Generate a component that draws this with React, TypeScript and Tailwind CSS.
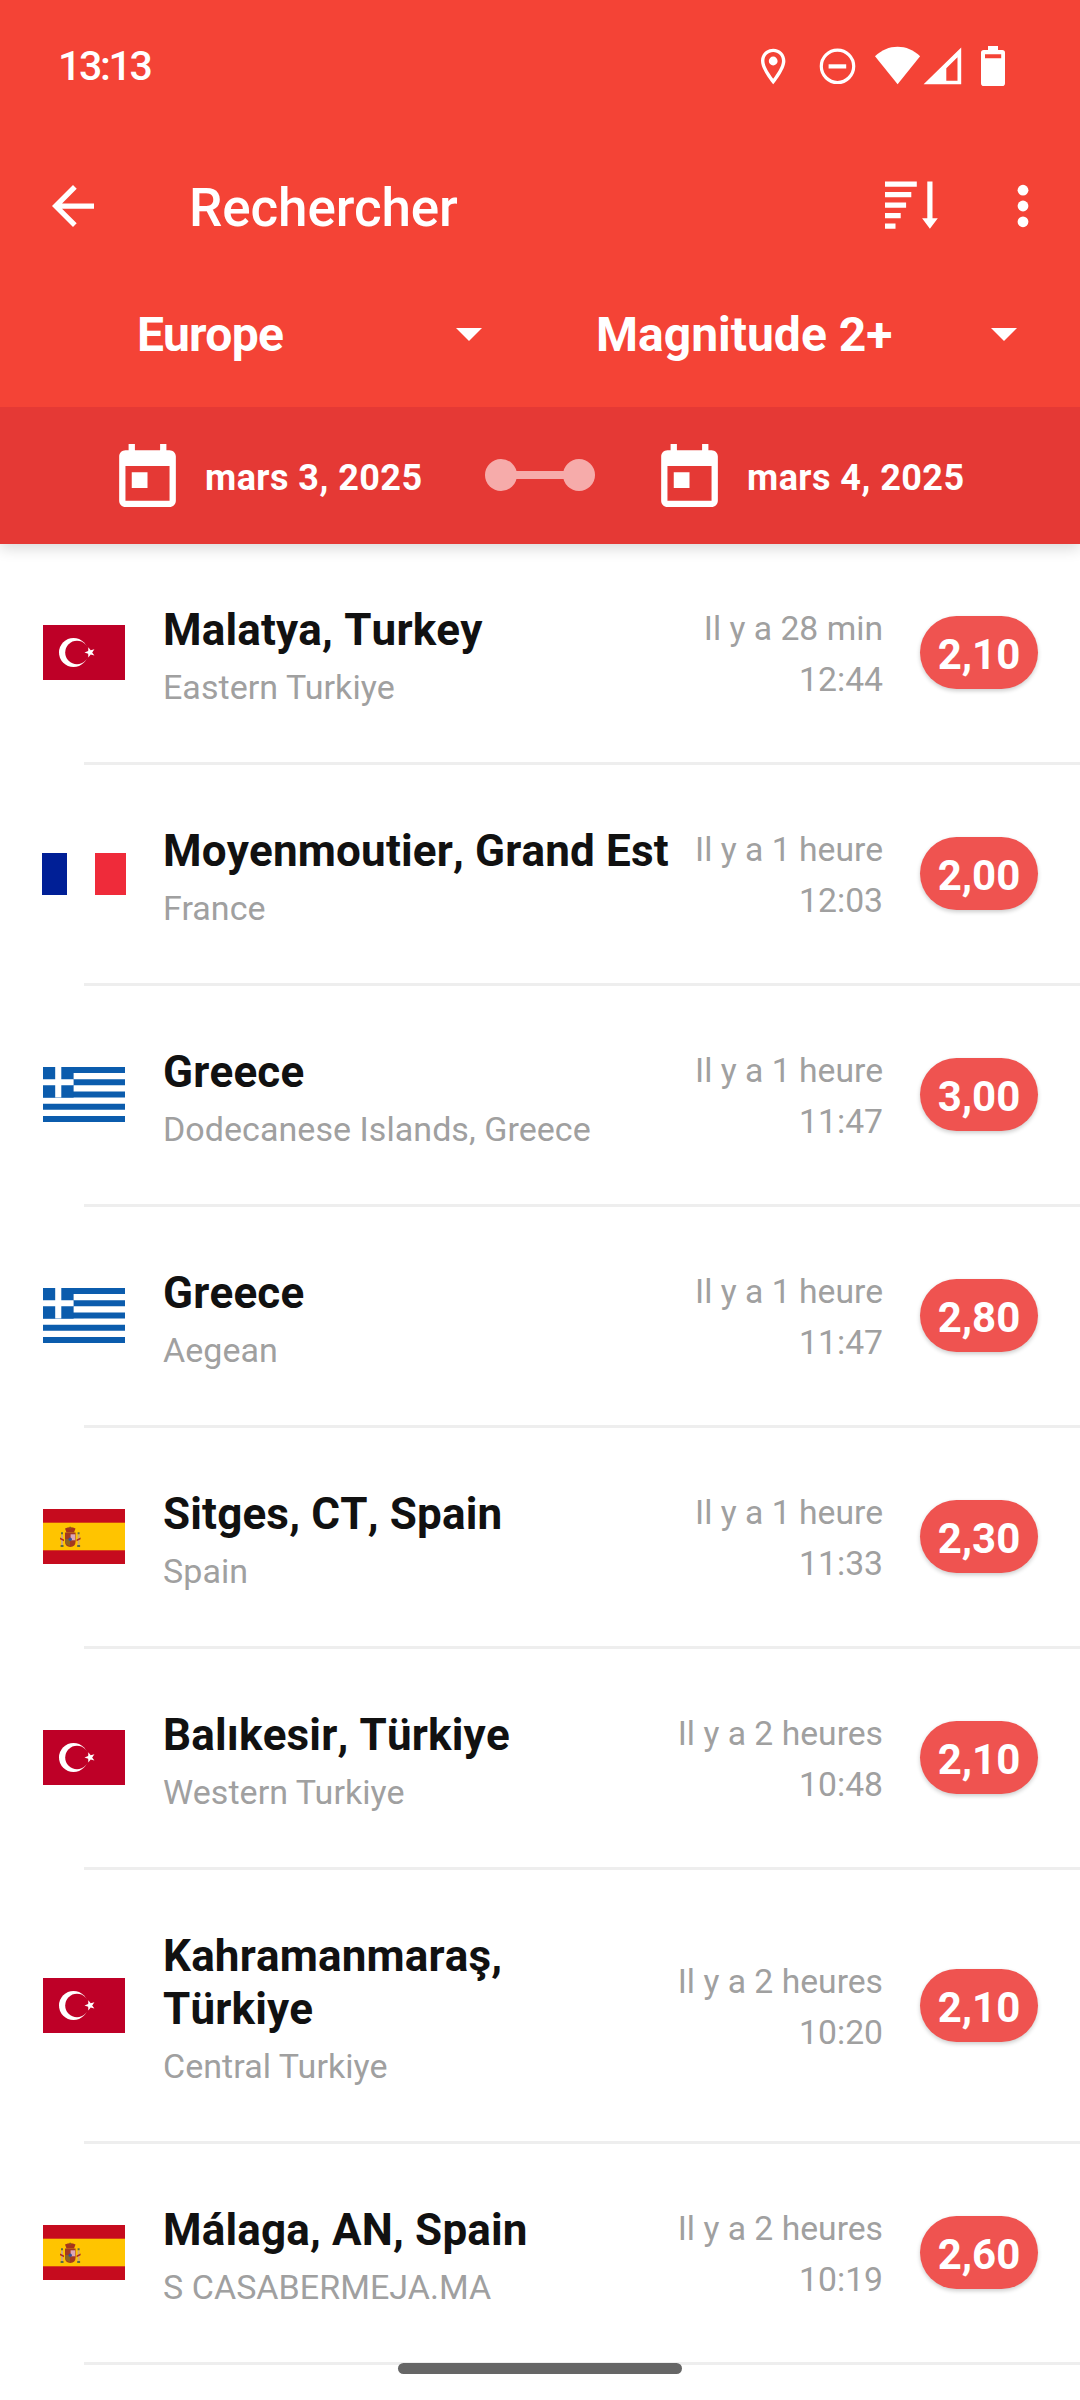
import type { ReactNode } from 'react';

type Country = 'tr' | 'fr' | 'gr' | 'es';

interface Quake {
  country: Country;
  place: string;
  region: string;
  ago: string;
  time: string;
  magnitude: string;
}

const quakes: Quake[] = [
  { country: 'tr', place: 'Malatya, Turkey', region: 'Eastern Turkiye', ago: 'Il y a 28 min', time: '12:44', magnitude: '2,10' },
  { country: 'fr', place: 'Moyenmoutier, Grand Est', region: 'France', ago: 'Il y a 1 heure', time: '12:03', magnitude: '2,00' },
  { country: 'gr', place: 'Greece', region: 'Dodecanese Islands, Greece', ago: 'Il y a 1 heure', time: '11:47', magnitude: '3,00' },
  { country: 'gr', place: 'Greece', region: 'Aegean', ago: 'Il y a 1 heure', time: '11:47', magnitude: '2,80' },
  { country: 'es', place: 'Sitges, CT, Spain', region: 'Spain', ago: 'Il y a 1 heure', time: '11:33', magnitude: '2,30' },
  { country: 'tr', place: 'Balıkesir, Türkiye', region: 'Western Turkiye', ago: 'Il y a 2 heures', time: '10:48', magnitude: '2,10' },
  { country: 'tr', place: 'Kahramanmaraş, Türkiye', region: 'Central Turkiye', ago: 'Il y a 2 heures', time: '10:20', magnitude: '2,10' },
  { country: 'es', place: 'Málaga, AN, Spain', region: 'S CASABERMEJA.MA', ago: 'Il y a 2 heures', time: '10:19', magnitude: '2,60' },
];

const flags: Record<Country, ReactNode> = {
  tr: (
    <svg viewBox="0 0 82 55" className="w-[82px] h-[55px]">
      <rect width="82" height="55" fill="#be0027" />
      <circle cx="30.5" cy="27.5" r="14.5" fill="#fff" />
      <circle cx="34" cy="27.5" r="11.8" fill="#be0027" />
      <path d="M41.5 27.4l3.7-1.3.1-3.9 2.4 3.1 3.7-1.1-2.2 3.2 2.2 3.2-3.7-1.1-2.4 3.1-.1-3.9z" fill="#fff" />
    </svg>
  ),
  fr: (
    <svg viewBox="0 0 84 42" className="w-[84px] h-[42px]">
      <rect width="25" height="42" fill="#001f96" />
      <rect x="25" width="28" height="42" fill="#fff" />
      <rect x="53" width="31" height="42" fill="#ef2b3a" />
    </svg>
  ),
  gr: (
    <svg viewBox="0 0 82 55" className="w-[82px] h-[55px]">
      <rect width="82" height="55" fill="#fff" />
      <path
        d="M0 0h82v6.1H0zM0 12.2h82v6.1H0zM0 24.4h82v6.1H0zM0 36.7h82v6.1H0zM0 48.9h82V55H0z"
        fill="#0b5cad"
      />
      <rect width="30.6" height="30.6" fill="#0b5cad" />
      <path d="M12.2 0h6.1v30.6h-6.1zM0 12.2h30.6v6.1H0z" fill="#fff" />
    </svg>
  ),
  es: (
    <svg viewBox="0 0 82 55" className="w-[82px] h-[55px]">
      <rect width="82" height="55" fill="#c60b1e" />
      <rect y="13.7" width="82" height="27.6" fill="#ffc400" />
      <path d="M22 19.5q5.500-2.500 10.500 0l-1.500 4h-7.500z" fill="#a5341b" />
      <path d="M26.400 17.800h1.600v2h-1.600z" fill="#8a5a1e" />
      <path d="M22 23.500h10.600v9q0 5-5.300 5.600-5.300-.6-5.300-5.600z" fill="#a33a20" />
      <path d="M22 30h5v7q-5-1-5-5z" fill="#8d6420" />
      <path d="M27.600 25.300h4.600v6h-4.600z" fill="#dba6b8" />
      <circle cx="27.200" cy="30.300" r="1.700" fill="#3a4f96" />
      <path d="M18 25.500h2V38h-2zM34.600 25.500h2V38h-2z" fill="#d0a878" />
      <path d="M17.600 36h2.900v2h-2.900zM34.200 36h2.900v2h-2.900zM18 23.200h2v2h-2zM34.600 23.200h2v2h-2z" fill="#5d6b45" />
      <path d="M17 28.500l4 2v1.800l-4-2zM37.600 28.500l-4 2v1.800l4-2z" fill="#b02a1e" />
    </svg>
  ),
};

const StatusIcons = () => (
  <svg viewBox="760 44 246 44" className="w-[246px] h-[44px]" fill="#fff">
    <path
      fillRule="evenodd"
      d="M773.2 48.700c-6.900 0-12.200 5.400-12.200 12.200 0 8.900 12.200 23.300 12.200 23.300s12.200-14.400 12.200-23.300c0-6.800-5.300-12.200-12.200-12.200zm0 3.400c4.900 0 8.800 3.900 8.800 8.800 0 5.300-5.400 13.300-8.800 17.800-3.400-4.500-8.800-12.500-8.800-17.800 0-4.900 3.900-8.800 8.800-8.800z"
    />
    <circle cx="773.200" cy="61" r="4.400" />
    <circle cx="837.500" cy="66.300" r="16.200" fill="none" stroke="#fff" strokeWidth="3.200" />
    <rect x="828.600" y="64.300" width="17.600" height="4.200" />
    <path d="M897.600 84.200L875 56.200C881.500 50 889.300 46.700 897.600 46.700s16.100 3.300 22.500 9.500z" />
    <path fillRule="evenodd" d="M923.600 84.200L961.200 47.400v36.800zM946.300 80.700h11.200V57.300l-11.200 11z" />
    <path
      fillRule="evenodd"
      d="M988 46h10v4h4.200a2.800 2.800 0 0 1 2.800 2.800v30.400a2.800 2.800 0 0 1-2.800 2.800h-18.400a2.800 2.800 0 0 1-2.800-2.800V52.800a2.800 2.800 0 0 1 2.800-2.800h4.200zM985 54.200v4h16.200v-4z"
    />
  </svg>
);

const BackIcon = () => (
  <svg viewBox="4 4 16 16" className="w-[42px] h-[42px]" fill="#fff">
    <path d="M20 11H7.830l5.590-5.590L12 4l-8 8 8 8 1.410-1.410L7.830 13H20v-2z" />
  </svg>
);

const SortIcon = () => (
  <svg viewBox="0 0 53 48" className="w-[53px] h-[48px] mb-[2px]" fill="#fff">
    <path d="M0 .5h31.800v5.200H0zM0 11h26.300v5.200H0zM0 21.500h21.100v5.200H0zM0 32h15.700v5.200H0zM0 42.500h10.500v5.200H0z" />
    <path d="M42.300.5h5.200v36.700h5.300L44.900 47.700l-7.800-10.500h5.200z" />
  </svg>
);

const MoreIcon = () => (
  <svg viewBox="0 0 12 44" className="w-[12px] h-[44px]" fill="#fff">
    <circle cx="6" cy="6.200" r="5.400" />
    <circle cx="6" cy="22" r="5.400" />
    <circle cx="6" cy="37.800" r="5.400" />
  </svg>
);

const DropDownIcon = () => (
  <svg viewBox="0 0 26 13" className="w-[26px] h-[13px] shrink-0" fill="#fff">
    <path d="M0 0h26L13 13z" />
  </svg>
);

const CalendarIcon = () => (
  <svg viewBox="3 1 18 20" className="w-[57px] h-[63px] shrink-0" fill="#fff">
    <path d="M19 3h-1V1h-2v2H8V1H6v2H5c-1.110 0-1.990.9-1.990 2L3 19c0 1.100.890 2 2 2h14c1.100 0 2-.9 2-2V5c0-1.100-.9-2-2-2zm0 16H5V8h14v11zM7 10h5v5H7z" />
  </svg>
);

const RangeIcon = () => (
  <svg viewBox="0 0 110 32" className="w-[110px] h-[32px] shrink-0" fill="#f6abaa">
    <rect x="16" y="12" width="78" height="8" />
    <circle cx="16" cy="16" r="16" />
    <circle cx="94" cy="16" r="16" />
  </svg>
);

const QuakeRow = ({ quake }: { quake: Quake }) => (
  <li>
    <div className="flex items-center pr-[42px]">
      <div className="w-[168px] -mr-[5px] mb-px flex justify-center shrink-0">{flags[quake.country]}</div>
      <div className="flex-1 min-w-0 pt-[60px] pb-[52px]">
        <p className="text-[44px] leading-[53px] tracking-[0.17px] font-bold text-[#111] [font-kerning:none]">{quake.place}</p>
        <p className="mt-2 text-[34px] leading-[45px] tracking-[0.05px] text-[#a0a0a0]">{quake.region}</p>
      </div>
      <div className="ml-[22px] mr-[37px] mt-[2px] shrink-0 text-right text-[33.7px] leading-[51px] text-[#a0a0a0]">
        <p>{quake.ago}</p>
        <p>{quake.time}</p>
      </div>
      <div className="w-[118px] h-[73px] mb-px shrink-0 rounded-full bg-[#ef5350] shadow-[0_2px_4px_rgba(0,0,0,0.2)] flex items-center justify-center text-[42px] leading-none font-bold text-white">
        <span className="pt-[5px]">{quake.magnitude}</span>
      </div>
    </div>
    <div className="ml-[84px] h-[3px] bg-[#eee]" />
  </li>
);

const App = () => {
  return (
    <div className="relative w-[1080px] h-[2400px] overflow-hidden bg-white font-['Roboto',sans-serif]">
      <header className="text-white shadow-[0_4px_14px_rgba(0,0,0,0.16)]">
        <div className="bg-[#f44336] h-[407px]">
          {/* Status bar */}
          <div className="h-[132px] flex items-center justify-between pl-[58px] pr-[74px]">
            <span className="pt-px text-[41px] leading-none font-medium tracking-[-2.3px]">13:13</span>
            <StatusIcons />
          </div>

          {/* Toolbar */}
          <div className="h-[147px] flex items-center pl-[52px] pr-[51px]">
            <BackIcon />
            <h1 className="ml-[95px] flex-1 pt-[5px] text-[53px] leading-none tracking-[-0.1px] font-medium">Rechercher</h1>
            <SortIcon />
            <div className="ml-[79px]">
              <MoreIcon />
            </div>
          </div>

          {/* Filters */}
          <div className="h-[110px] flex items-center text-[48px] leading-none font-bold">
            <div className="w-[345px] ml-[137px] flex items-center justify-between">
              <span className="pt-[2px] tracking-[-0.7px]">Europe</span>
              <DropDownIcon />
            </div>
            <div className="w-[421px] ml-[114px] flex items-center justify-between">
              <span className="pt-[2px]">Magnitude 2+</span>
              <DropDownIcon />
            </div>
          </div>
        </div>

        {/* Date range */}
        <div className="bg-[#e53935] h-[137px] flex items-center pl-[119px] pb-px text-[36px] leading-none tracking-[0.45px] font-bold [font-kerning:none]">
          <CalendarIcon />
          <span className="ml-[29px] w-[280px] pt-[5px]">mars 3, 2025</span>
          <RangeIcon />
          <span className="ml-[66px]">
            <CalendarIcon />
          </span>
          <span className="ml-[29px] pt-[5px]">mars 4, 2025</span>
        </div>
      </header>

      <ul>
        {quakes.map((quake, i) => (
          <QuakeRow key={i} quake={quake} />
        ))}
      </ul>

      {/* Gesture bar */}
      <div className="absolute left-[398px] top-[2363px] w-[284px] h-[11px] rounded-full bg-[#666]" />
    </div>
  );
};

export default App;
